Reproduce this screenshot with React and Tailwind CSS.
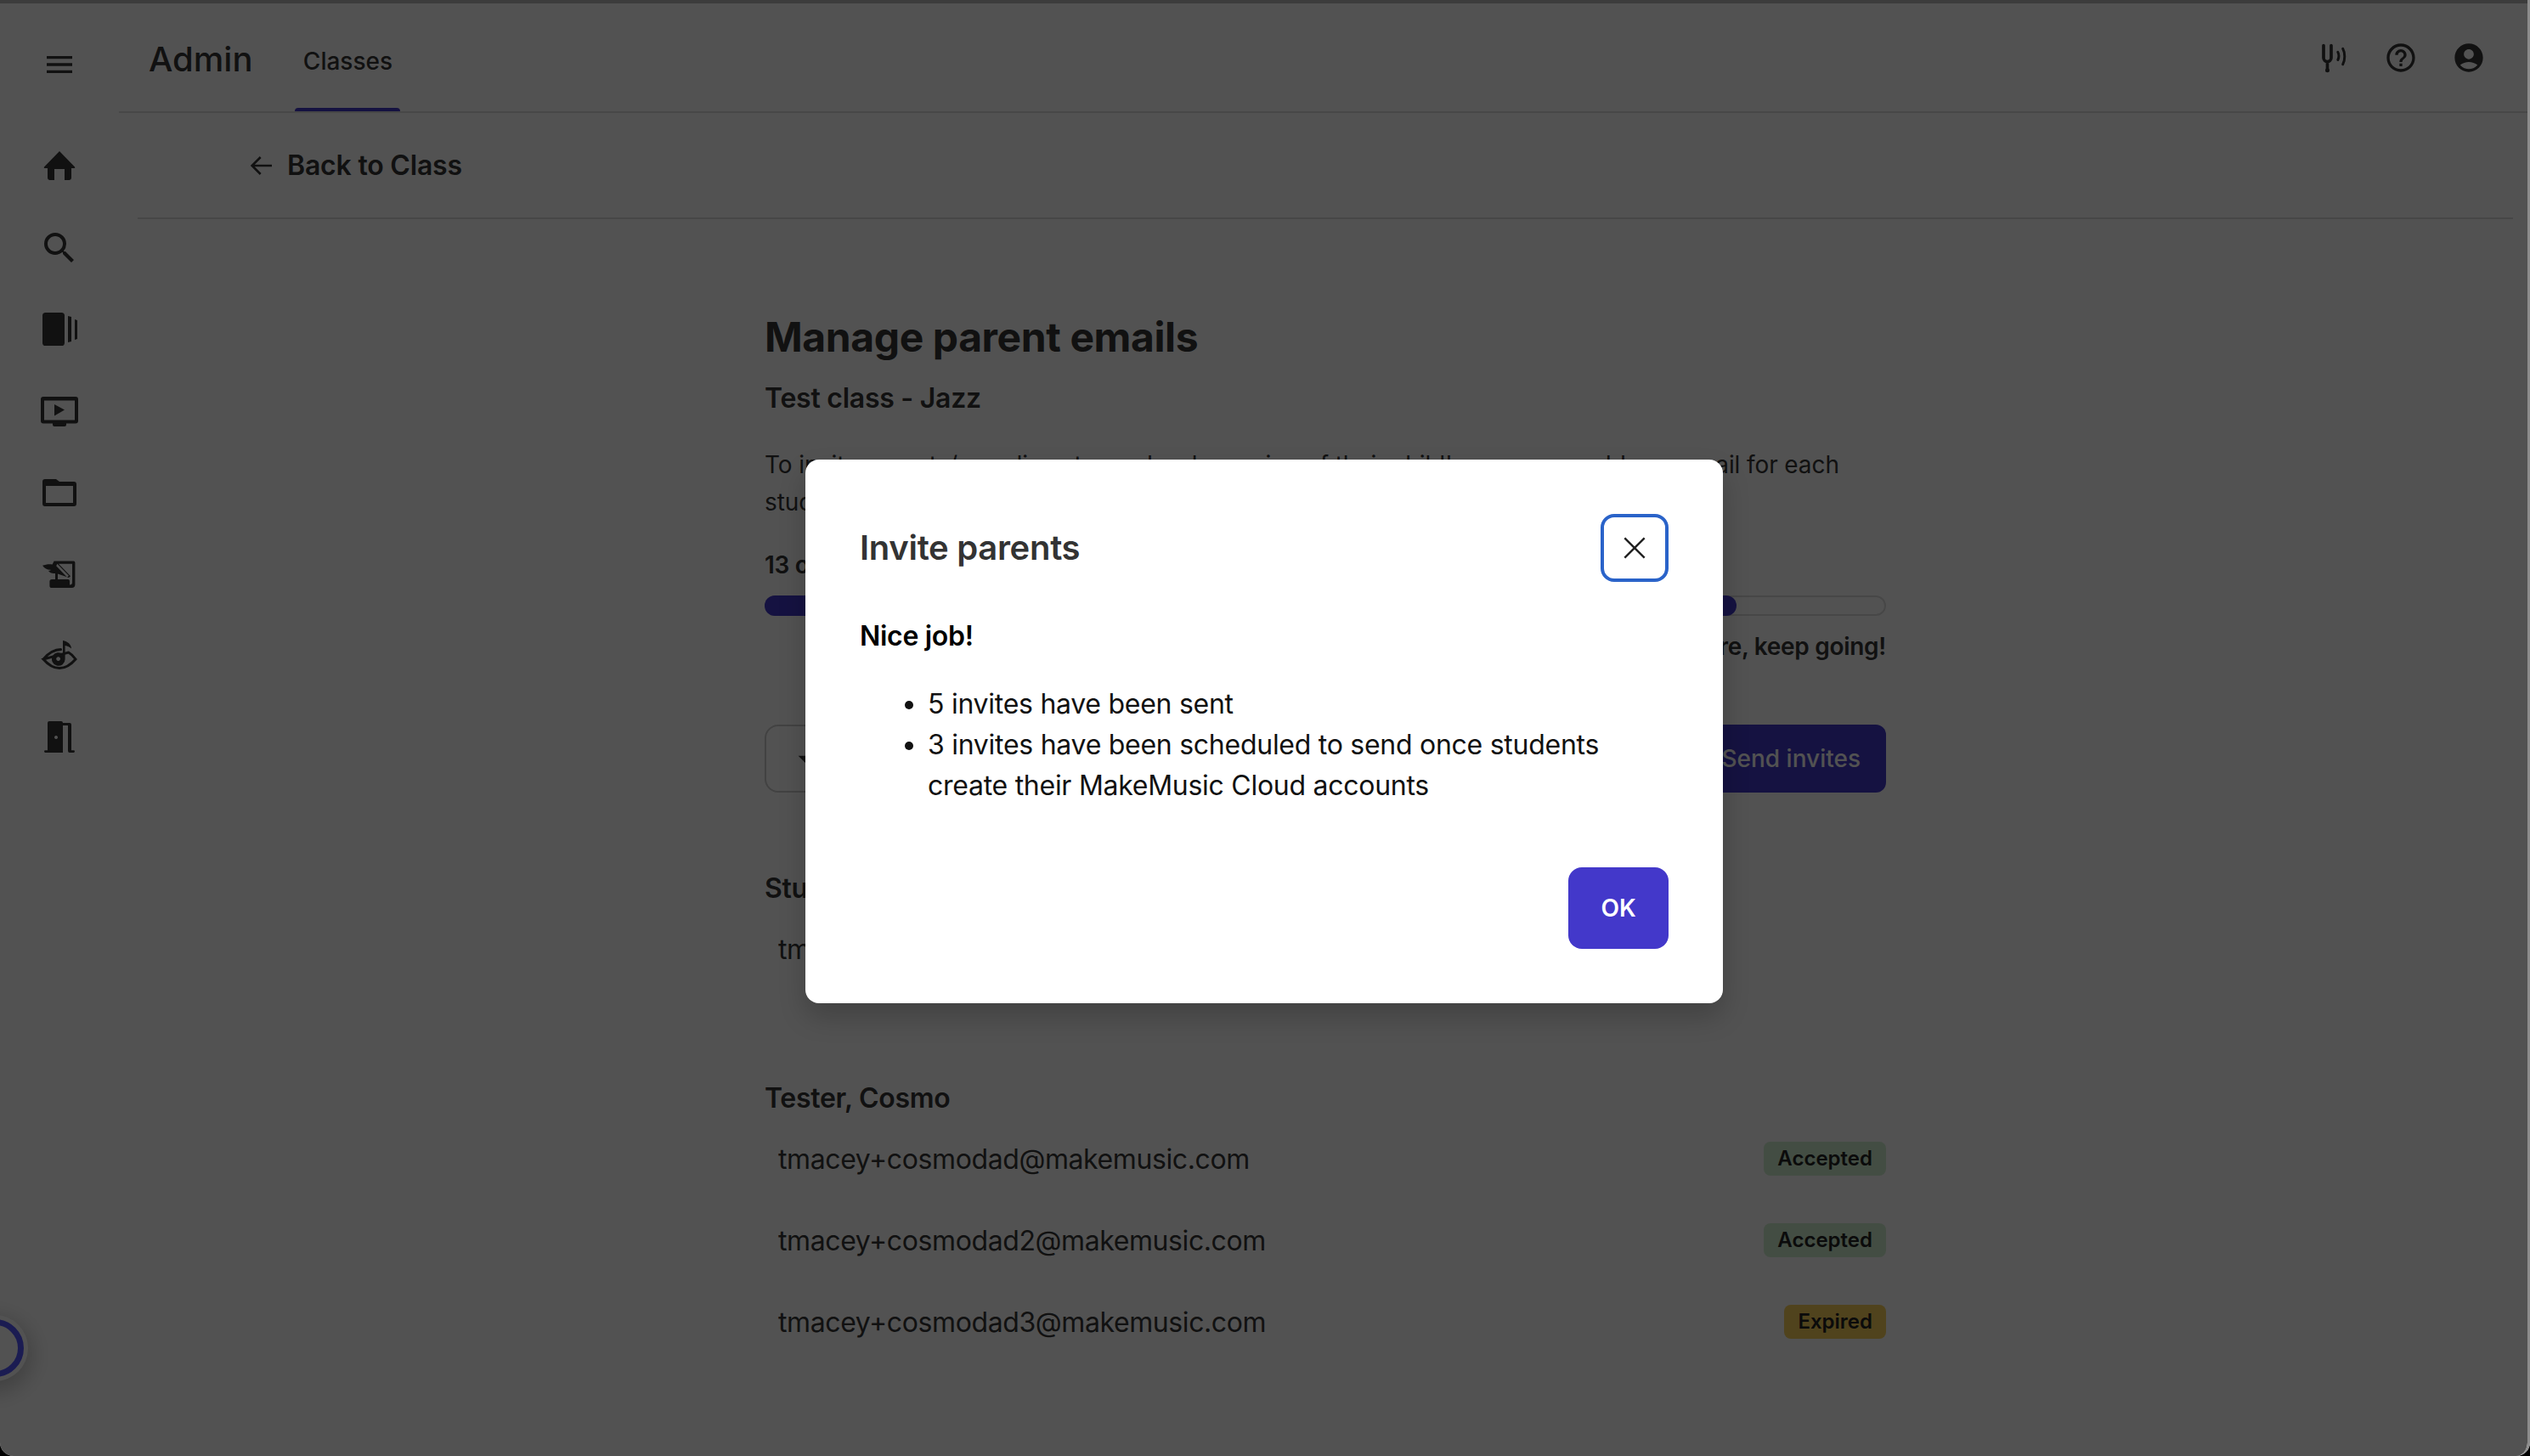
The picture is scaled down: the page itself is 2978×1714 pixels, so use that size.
import React from "react";

function NavIcon({ children, size = 48 }) {
  return (
    <div className="flex h-[48px] w-[48px] items-center justify-center">
      <svg width={size} height={size} viewBox="0 0 24 24" fill="currentColor">{children}</svg>
    </div>
  );
}

function Email({ email, status, cls }) {
  return (
    <div className="flex h-[96px] items-center justify-between pl-4">
      <span className="text-[32px] leading-[48px] tracking-[-0.4px] text-[#353535]">{email}</span>
      {status && (
        <span className={`mb-[2px] rounded-[8px] px-4 text-[24px] leading-[40px] font-semibold ${cls}`}>{status}</span>
      )}
    </div>
  );
}

export default function App() {
  return (
    <div className="relative h-[1714px] w-[2978px] overflow-hidden bg-black font-['Inter',sans-serif] text-[#353535]">
      <div className="relative flex h-full w-full rounded-b-[16px] border-t-[4px] border-[#bbb] bg-white">
        <aside className="flex w-[140px] shrink-0 flex-col items-center pt-[48px]">
          <NavIcon size={40}><path d="M3 18h18v-2H3v2zm0-5h18v-2H3v2zm0-7v2h18V6H3z" /></NavIcon>
          <div className="mt-[72px] flex flex-col items-center gap-[48px]">
            <NavIcon><path d="M12 3 21 12.300a.4.4 0 0 1-.3.7H19v5.800a1.200 1.200 0 0 1-1.200 1.200H15v-6.500H9V20H6.200A1.200 1.200 0 0 1 5 18.800V13H3.300a.4.4 0 0 1-.3-.7z" /></NavIcon>
            <NavIcon><path d="M15.500 14h-.79l-.28-.27A6.470 6.470 0 0 0 16 9.500 6.500 6.500 0 1 0 9.500 16c1.610 0 3.090-.59 4.230-1.570l.27.28v.79l5 5L20.490 19l-5-5zm-6 0C7.010 14 5 11.990 5 9.500S7.010 5 9.500 5 14 7.010 14 9.500 11.990 14 9.500 14z" /></NavIcon>
            <NavIcon><rect x="2" y="2" width="13" height="19.500" rx="1.800" /><path d="M17 4l2 .5v14.500l-2 .5zM21 6l1.500.5v11l-1.500.5z" /></NavIcon>
            <NavIcon><path fillRule="evenodd" d="M2.500 3.500h19A1.500 1.500 0 0 1 23 5v12.800a1.500 1.500 0 0 1-1.500 1.500H16V20a1 1 0 0 1-1 1H9a1 1 0 0 1-1-1v-.7H2.500A1.500 1.500 0 0 1 1 17.800V5a1.500 1.500 0 0 1 1.500-1.500zM3 5.800v11.500h18V5.800zM9 8l6 3.300L9 14.700z" /></NavIcon>
            <NavIcon><path fillRule="evenodd" d="M3.500 4H10l2 1.500h8.500A1.500 1.500 0 0 1 22 7v11.500a1.500 1.500 0 0 1-1.500 1.500h-17A1.500 1.500 0 0 1 2 18.500v-13A1.500 1.500 0 0 1 3.500 4zM4 8v10h16V8z" /></NavIcon>
            <NavIcon><path fillRule="evenodd" d="M8.800 4.300h11.600a.8.800 0 0 1 .8.800V18a2 2 0 0 1-2 2H7.500a1.300 1.300 0 0 1-1.300-1.300v-2.400A1.300 1.300 0 0 1 7.500 15h2v-3.500h-.3c-1.700.2-3-.5-3.700-1.500 1-.1 1.300-.3 1.400-.6-1.700.2-3.600-.6-4.900-2.500 1.800-.8 4-1 5.800-.7zM10.700 5.900l6.800 7-1 .9-6.400-6.700zM11 11.800V15h6c.6 0 1 .4 1 1v2.200c1-.1 1.500-.4 1.500-1.200V5.900h-8l7 7.200-1 .9z" /></NavIcon>
            <NavIcon><path d="M2.500 14C6 10 9 8.300 12.800 8.300M17.300 10c1.800 1 3 2.300 4.200 4-3.500 4-6.300 5.300-9.500 5.300S6 18 2.500 14z" fill="none" stroke="currentColor" strokeWidth="1.500" strokeLinecap="round" /><path fillRule="evenodd" d="M14 3c2.800.5 5 2.400 5 4.800-1-1-2.200-1.600-3.700-1.800v8a3.900 3.900 0 1 1-1.300-2.900zM11.300 12.600a1.200 1.200 0 1 0 .01 0z" /></NavIcon>
            <NavIcon><path fillRule="evenodd" d="M6 2.500h7a1 1 0 0 1 1 1V21H3.700a.7.700 0 0 1 0-1.400H5V3.500a1 1 0 0 1 1-1zM10 11a1 1 0 1 0 .01 0zM14 3.500h4a1 1 0 0 1 1 1v15.100h1.300a.7.700 0 0 1 0 1.400H18a1 1 0 0 1-1-1V5h-3z" /></NavIcon>
          </div>
        </aside>

        <main className="flex min-w-0 flex-1 flex-col">
          <header className="flex h-[129px] items-start justify-between border-b-2 border-[#ddd] pr-[48px]">
            <div className="flex items-start">
              <span className="mt-[36px] ml-[35px] text-[40px] leading-[60px] font-medium">Admin</span>
              <div className="ml-[50px] flex h-[127px] flex-col items-center justify-between">
                <span className="mt-[48px] px-2 text-[28px] leading-[40px] font-medium">Classes</span>
                <span className="h-[4px] w-[124px] rounded-t bg-[#4338ca]" />
              </div>
            </div>
            <div className="mt-[40px] flex items-center gap-[32px]">
              <NavIcon size={40}><path d="M5.400 3.300v8.700a2.700 2.700 0 0 0 2.700 2.700 2.700 2.700 0 0 0 2.700-2.700V3.300M8.100 14.700v6.300" fill="none" stroke="currentColor" strokeWidth="2.200" strokeLinecap="round" /><circle cx="8.100" cy="20.800" r="1.500" /><path d="M15.500 8c.8 1.500.8 3.800 0 5.500M19 5.600c1.700 3 1.700 8 0 11" fill="none" stroke="currentColor" strokeWidth="1.800" strokeLinecap="round" /></NavIcon>
              <NavIcon size={40}><path d="M11 18h2v-2h-2v2zm1-16C6.480 2 2 6.480 2 12s4.480 10 10 10 10-4.480 10-10S17.520 2 12 2zm0 18c-4.410 0-8-3.590-8-8s3.590-8 8-8 8 3.590 8 8-3.590 8-8 8zm0-14c-2.210 0-4 1.790-4 4h2c0-1.100.9-2 2-2s2 .9 2 2c0 2-3 1.750-3 5h2c0-2.250 3-2.500 3-5 0-2.210-1.790-4-4-4z" /></NavIcon>
              <NavIcon size={40}><path d="M12 2C6.480 2 2 6.480 2 12s4.480 10 10 10 10-4.480 10-10S17.520 2 12 2zm0 4c1.930 0 3.500 1.570 3.500 3.500S13.930 13 12 13s-3.500-1.570-3.500-3.500S10.070 6 12 6zm0 14c-2.030 0-4.430-.82-6.140-2.880a9.947 9.947 0 0 1 12.280 0C16.430 19.180 14.030 20 12 20z" /></NavIcon>
            </div>
          </header>

          <div className="mr-[20px] ml-[22px] flex h-[125px] items-center border-b-2 border-[#ddd] pl-[130px]">
            <svg width="32" height="32" viewBox="0 0 24 24" fill="none" stroke="currentColor" strokeWidth="2"><path d="M21 12H4M11 4.500 3.500 12l7.500 7.500" /></svg>
            <span className="ml-[14px] text-[32px] leading-[48px] font-semibold tracking-[-0.2px]">Back to Class</span>
          </div>

          <div className="ml-[760px] w-[1320px] pt-[103px]">
            <h1 className="text-[48px] leading-[72px] font-bold tracking-[-0.4px]">Manage parent emails</h1>
            <h2 className="mt-[12px] text-[32px] leading-[48px] font-semibold tracking-[-0.25px]">Test class - Jazz</h2>
            <p className="mt-[32px] text-[28px] leading-[44px] tracking-[-0.1px]">To invite parents/guardians to read-only version of their child's progress, add one email for each student.</p>
            <p className="mt-[32px] text-[28px] leading-[40px] font-semibold tracking-[-0.3px]">13 of 24 students have a parent email</p>
            <div className="mt-[16px] h-[24px] w-full rounded-full border-2 border-[#ddd]">
              <div className="-m-[2px] h-[24px] w-[1144px] rounded-full bg-[#4338ca]" />
            </div>
            <p className="mt-[16px] text-right text-[28px] leading-[40px] font-semibold tracking-[-0.3px]">You're almost there, keep going!</p>
            <div className="mt-[72px] flex items-center justify-between">
              <div className="flex h-[80px] w-[340px] items-center rounded-[16px] border-2 border-[#ccc] pl-[26px]">
                <svg width="40" height="40" viewBox="0 0 24 24" fill="currentColor"><path d="M7 10l5 5 5-5z" /></svg>
              </div>
              <button className="flex h-[80px] items-center rounded-[12px] bg-[#4338ca] pr-[30px] pl-[34px] text-[28px] font-medium text-white">Send invites</button>
            </div>
            <h3 className="mt-[89px] text-[32px] leading-[48px] font-semibold tracking-[-0.3px]">Student, Aaron</h3>
            <Email email="tmacey+aarondad@makemusic.com" />
            <h3 className="mt-[103px] text-[32px] leading-[48px] font-semibold tracking-[-0.3px]">Tester, Cosmo</h3>
            <Email email="tmacey+cosmodad@makemusic.com" status="Accepted" cls="bg-[#d0f0d0] text-[#222]" />
            <Email email="tmacey+cosmodad2@makemusic.com" status="Accepted" cls="bg-[#d0f0d0] text-[#222]" />
            <Email email="tmacey+cosmodad3@makemusic.com" status="Expired" cls="bg-[#f7cf5a] text-[#222]" />
          </div>
        </main>

        <div className="absolute top-[1549px] left-[-40px] h-[68px] w-[68px] rounded-full border-[7px] border-[#5458ff] bg-white shadow-[0_0_0_5px_#fff,0_8px_28px_8px_rgba(0,0,0,0.25)]" />
      </div>

      <div className="absolute inset-0 rounded-b-[16px] border-r-[3px] border-[#8c8c8c] bg-black/68 bg-clip-padding" />

      <div className="absolute top-[541px] left-[948px] h-[640px] w-[1080px] rounded-[16px] bg-white p-[64px] shadow-[0_16px_32px_rgba(0,0,0,0.2)]">
        <div className="flex items-center justify-between">
          <h2 className="text-[40px] leading-[60px] font-semibold tracking-[-0.3px] text-[#333]">Invite parents</h2>
          <button className="flex h-[80px] w-[80px] items-center justify-center rounded-[16px] border-[4px] border-[#2a63c9] text-[#222]">
            <svg width="40" height="40" viewBox="0 0 24 24" fill="none" stroke="currentColor" strokeWidth="1.500"><path d="M5 5l14 14M19 5 5 19" /></svg>
          </button>
        </div>
        <p className="mt-[40px] text-[32px] leading-[48px] font-semibold tracking-[-0.3px] text-black">Nice job!</p>
        <ul className="mt-[32px] list-disc pl-[80px] text-[32px] leading-[48px] tracking-[-0.27px] text-[#111]">
          <li>5 invites have been sent</li>
          <li>3 invites have been scheduled to send once students create their MakeMusic Cloud accounts</li>
        </ul>
        <div className="absolute right-[64px] bottom-[64px]">
          <button className="h-[96px] w-[118px] rounded-[16px] bg-[#4338ca] text-[28px] font-semibold text-white">OK</button>
        </div>
      </div>
    </div>
  );
}
